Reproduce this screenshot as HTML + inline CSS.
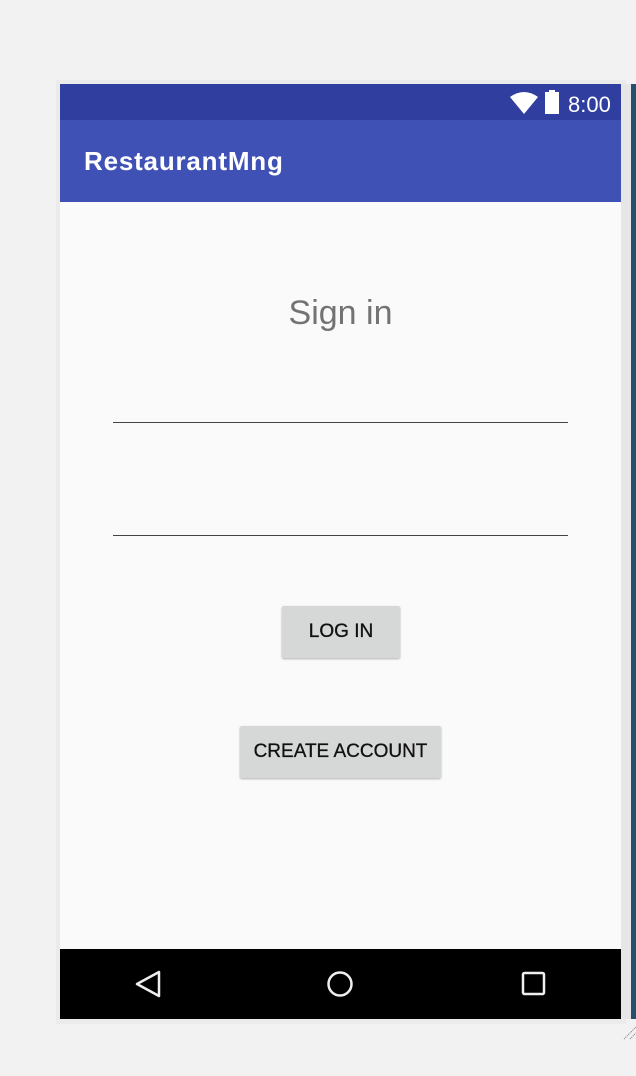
<!DOCTYPE html><html><head><style>
body{margin:0;width:636px;height:1076px;background:#f2f2f2;position:relative;overflow:hidden;font-family:"Liberation Sans",Roboto,sans-serif}
div{position:absolute;box-sizing:border-box}
.btn{background:#d6d7d7;border-radius:2px;box-shadow:0 1px 2px rgba(0,0,0,.3);font-size:19px;color:#111;text-align:center;line-height:52px;white-space:nowrap;-webkit-text-stroke:0.3px #111}
</style></head><body>
<div style="left:56px;top:80px;width:570px;height:944px;background:#ebebeb"></div>
<div style="left:621px;top:84px;width:10px;height:935px;background:#e6e6e6"></div>
<div style="left:631px;top:84px;width:5px;height:935px;background:#27506f"></div>
<div style="left:60px;top:84px;width:561px;height:935px;background:#fafafa"></div>
<div style="left:60px;top:84px;width:561px;height:36px;background:#303f9f"></div>
<div style="left:60px;top:120px;width:561px;height:82px;background:#3f51b5"></div>
<svg style="position:absolute;left:509px;top:90px" width="54" height="26"><path d="M1 7 Q15 -3 29 7 L15 24 Z" fill="#fff"/><rect x="36" y="2" width="14" height="22" fill="#fff"/><rect x="40" y="0" width="6" height="3" fill="#fff"/></svg>
<div style="left:568px;top:92px;color:#fff;font-size:22px">8:00</div>
<div style="left:84px;top:146px;color:#fff;font-size:26px;font-weight:bold;letter-spacing:0.8px">RestaurantMng</div>
<div style="left:60px;top:294px;width:561px;text-align:center;color:#737373;font-size:34px">Sign in</div>
<div style="left:113px;top:422px;width:455px;height:1px;background:#444"></div>
<div style="left:113px;top:535px;width:455px;height:1px;background:#444"></div>
<div class="btn" style="left:282px;top:606px;width:118px;height:52px">LOG IN</div>
<div class="btn" style="left:240px;top:726px;width:201px;height:52px">CREATE ACCOUNT</div>
<div style="left:60px;top:949px;width:561px;height:70px;background:#000"></div>
<svg style="position:absolute;left:60px;top:949px" width="561" height="70"><path d="M99 23 L99 47 L77 35 Z" fill="none" stroke="#eee" stroke-width="2.5" stroke-linejoin="round"/><circle cx="280" cy="35" r="11.5" fill="none" stroke="#eee" stroke-width="2.5"/><rect x="463" y="24" width="21" height="21" rx="1.5" fill="none" stroke="#eee" stroke-width="2.5"/></svg>
<svg style="position:absolute;left:622px;top:1025px" width="14" height="16"><path d="M2 14 L14 2 M8 14 L14 8" stroke="#777" stroke-dasharray="1 1"/></svg>
</body></html>
